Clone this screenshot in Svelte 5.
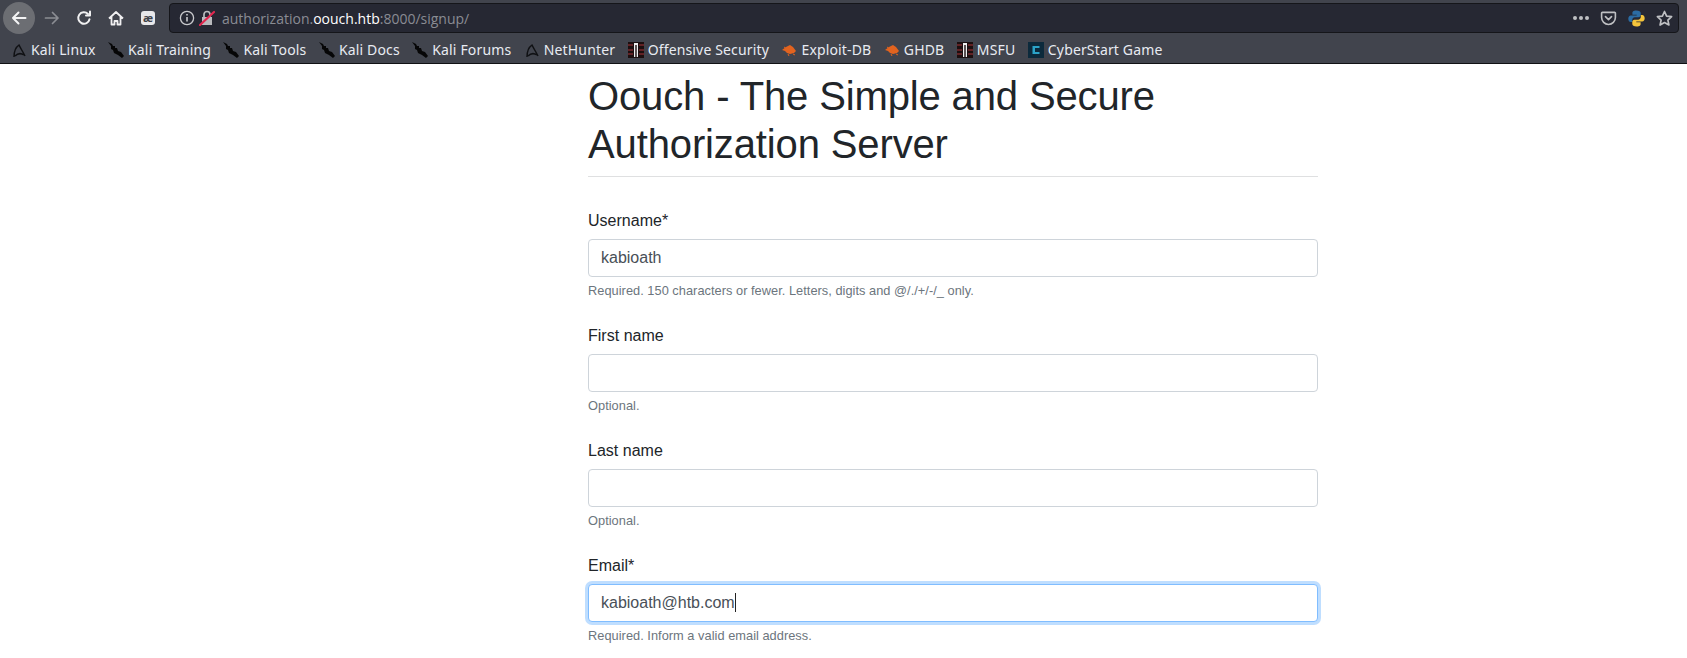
<script lang="ts">
  const bookmarks = [
    { name: "Kali Linux", icon: "dragon" },
    { name: "Kali Training", icon: "sword" },
    { name: "Kali Tools", icon: "sword" },
    { name: "Kali Docs", icon: "sword" },
    { name: "Kali Forums", icon: "sword" },
    { name: "NetHunter", icon: "dragon" },
    { name: "Offensive Security", icon: "offsec" },
    { name: "Exploit-DB", icon: "bug" },
    { name: "GHDB", icon: "bug" },
    { name: "MSFU", icon: "offsec" },
    { name: "CyberStart Game", icon: "cyber" },
  ];

  const fields = [
    { label: "Username*", value: "kabioath", help: "Required. 150 characters or fewer. Letters, digits and @/./+/-/_ only." },
    { label: "First name", value: "", help: "Optional." },
    { label: "Last name", value: "", help: "Optional." },
    { label: "Email*", value: "kabioath@htb.com", help: "Required. Inform a valid email address.", focused: true },
  ];
</script>

<div class="page">
  <header class="chrome">
    <div class="toolbar">
      <div class="nav">
        <span class="back">
          <svg width="16" height="16" viewBox="0 0 16 16" fill="none" stroke="#f4f4f5" stroke-width="2" stroke-linecap="round" stroke-linejoin="round"><path d="M14.500 8H2M7.500 2.500 2 8l5.500 5.500" /></svg>
        </span>
        <span class="tool">
          <svg width="16" height="16" viewBox="0 0 16 16" fill="none" stroke="#8b8d93" stroke-width="1.700" stroke-linecap="round" stroke-linejoin="round"><path d="M1.500 8H14M8.500 2.500 14 8l-5.500 5.500" /></svg>
        </span>
        <span class="tool">
          <svg width="16" height="16" viewBox="0 0 16 16" fill="none" stroke="#f0f0f1" stroke-width="2" stroke-linecap="round" stroke-linejoin="round"><path d="M13.500 9.200A5.700 5.700 0 1 1 12 4" /><path d="M14 1.500v4h-4" /></svg>
        </span>
        <span class="tool">
          <svg width="16" height="16" viewBox="0 0 16 16" fill="none" stroke="#f0f0f1" stroke-width="1.800" stroke-linejoin="round"><path d="M1 8.500 8 2l7 6.500M3.500 7v7.500h3V11h3v3.500h3V7" /></svg>
        </span>
        <span class="tool">
          <span class="ae">æ</span>
        </span>
      </div>
      <div class="urlbar">
        <svg class="info" width="16" height="16" viewBox="0 0 16 16" fill="none" stroke="#c9cacd" stroke-width="1.300"><circle cx="8" cy="8" r="6.600" /><path d="M8 7v4.500M8 4v1.600" stroke-width="1.600" /></svg>
        <svg class="lock" width="16" height="16" viewBox="0 0 16 16"><path d="M3 7h10v8H3Z" fill="#b9babd" /><path d="M5 7V4.500a3 3 0 0 1 6 0V7" fill="none" stroke="#b9babd" stroke-width="1.700" /><path d="M1 15 15 2" stroke="#e22850" stroke-width="2.200" stroke-linecap="round" /></svg>
        <span class="url">authorization.<b>oouch.htb</b>:8000/signup/</span>
        <span class="url-actions">
          <span class="dots"><i></i><i></i><i></i></span>
          <svg width="17" height="17" viewBox="0 0 18 18" fill="none" stroke="#bfc0c3" stroke-width="1.700" stroke-linecap="round" stroke-linejoin="round"><path d="M2.500 2.500h13a.8.8 0 0 1 .8.8V8a7.300 7.300 0 0 1-14.600 0V3.300a.8.8 0 0 1 .8-.8Z" /><path d="m5.800 7 3.200 3.200L12.200 7" /></svg>
          <svg width="17" height="17" viewBox="0 0 17 17"><path d="M8.400.5C5 .5 4.400 1.800 4.400 3v1.800h4.300v.7H2.800C1.300 5.500.3 6.800.3 8.700c0 2 1 3.300 2.400 3.300h1.500V10c0-1.400 1.200-2.700 2.700-2.700h3.700c1.200 0 2.100-1 2.100-2.200V3c0-1.400-1.500-2.500-4.600-2.500Z" fill="#2b6ca3" /><path d="M8.600 16.500c3.400 0 4-1.300 4-2.500v-1.800H8.300v-.7h5.900c1.500 0 2.500-1.300 2.500-3.200 0-2-1-3.300-2.400-3.300h-1.500V7c0 1.400-1.200 2.700-2.700 2.700H6.400c-1.200 0-2.100 1-2.100 2.200V14c0 1.400 1.500 2.500 4.300 2.500Z" fill="#f5c53b" /></svg>
          <svg width="17" height="17" viewBox="0 0 17 17" fill="none" stroke="#bfc0c3" stroke-width="1.700" stroke-linejoin="round"><path d="m8.500 1.500 2.100 4.600 5 .6-3.700 3.400 1 4.900-4.400-2.500L4.100 15l1-4.900L1.400 6.700l5-.6Z" /></svg>
        </span>
      </div>
    </div>
    <nav class="bookmarks">
      {#each bookmarks as mark}
        <span class="mark">
          {#if mark.icon === "dragon"}
            <svg width="16" height="16" viewBox="0 0 16 16" fill="none" stroke="#101114" stroke-width="1.500"><path d="M3 15c0-5 2-10 5-12 2 4 4 7 6 11M4 14c3-3 6-3 9-1" /></svg>
          {:else if mark.icon === "sword"}
            <svg width="16" height="16" viewBox="0 0 16 16" fill="#060607"><path d="M0 0 4 2 5 4 7 4 7 6 9 6 10 9 13 10 16 14 14 16 10 13 6 11 5 8 3 7 3 4Z" /></svg>
          {:else if mark.icon === "offsec"}
            <svg width="16" height="16" viewBox="0 0 16 16"><rect width="16" height="16" fill="#1c0f10" /><path d="M0 3h5M11 3h5M0 8h5M11 8h5M0 12h5M11 12h5" stroke="#7a2a2c" stroke-width="1.500" /><path d="M6 15V1h4v14H8.700V3H7.300v12Z" fill="#eee" /></svg>
          {:else if mark.icon === "bug"}
            <svg width="16" height="16" viewBox="0 0 16 16"><path d="M1 8l4-3 4-2 3 2 3 4-2 2-4 1-3-1-2-2Z" fill="#e2631f" /><path d="M3 5l3 2M7 12l1 2M12 12l2 1" stroke="#e2631f" /></svg>
          {:else}
            <svg width="16" height="16" viewBox="0 0 16 16"><rect width="16" height="16" fill="#0c2a3c" /><path d="M11.500 4h-7v8h7v-2h-4.500V6h4.500Z" fill="#2ba3c8" /></svg>
          {/if}
          <span>{mark.name}</span>
        </span>
      {/each}
    </nav>
  </header>

  <main class="content">
    <h1>Oouch - The Simple and Secure Authorization Server</h1>
    <hr />
    <form>
      {#each fields as field}
        <div class="group">
          <div class="label">{field.label}</div>
          <div class="input" class:focused={field.focused}>
            {field.value}{#if field.focused}<span class="caret"></span>{/if}
          </div>
          <small>{field.help}</small>
        </div>
      {/each}
    </form>
  </main>
</div>

<style>
  :global(body) {
    margin: 0;
    background: #fff;
    overflow: hidden;
  }

  .page {
    height: 658px;
    overflow: hidden;
    font-family: "Liberation Sans", Arial, sans-serif;
  }

  .chrome {
    background: #41444d;
    border-bottom: 1px solid #101114;
    font-family: "Noto Sans", sans-serif;
  }

  .toolbar {
    height: 36px;
    display: flex;
    align-items: center;
    padding: 0 8px 0 3px;
  }

  .nav {
    display: flex;
    align-items: center;
    width: 166px;
    flex-shrink: 0;
  }

  .back {
    width: 32px;
    height: 32px;
    margin-right: 1px;
    border-radius: 50%;
    background: #6c6e73;
    display: flex;
    align-items: center;
    justify-content: center;
  }

  .tool {
    width: 32px;
    height: 32px;
    display: flex;
    align-items: center;
    justify-content: center;
  }

  .ae {
    width: 14px;
    height: 14px;
    border-radius: 3px;
    background: #e8e8ea;
    color: #3f4249;
    font-size: 11px;
    line-height: 13px;
    text-align: center;
    font-weight: 700;
  }

  .urlbar {
    flex: 1;
    height: 30px;
    background: #262833;
    border: 1px solid #15161a;
    border-radius: 4px;
    display: flex;
    align-items: center;
    box-sizing: border-box;
    padding: 0 5px 0 9px;
    font-family: "Open Sans", sans-serif;
    font-size: 14px;
    color: #8a8c93;
  }

  .lock {
    margin-left: 4px;
  }

  .url {
    margin-left: 7px;
  }

  .url b {
    font-weight: 400;
    color: #fff;
  }

  .url-actions {
    margin-left: auto;
    display: flex;
    align-items: center;
    gap: 11px;
  }

  .dots {
    display: flex;
    gap: 2px;
  }

  .dots i {
    width: 4px;
    height: 4px;
    border-radius: 50%;
    background: #bfc0c3;
  }

  .bookmarks {
    height: 27px;
    display: flex;
    align-items: center;
    padding-left: 11px;
    gap: 12.500px;
    color: #e8ebf2;
    font-size: 14px;
    letter-spacing: 0.15px;
  }

  .mark {
    display: flex;
    align-items: center;
    gap: 4px;
    white-space: nowrap;
  }

  .content {
    width: 730px;
    margin-left: 588px;
    padding-top: 8px;
    color: #212529;
  }

  h1 {
    margin: 0;
    font-size: 40px;
    font-weight: 400;
    line-height: 48px;
    letter-spacing: -0.13px;
  }

  hr {
    margin: 8px 0 32px;
    border: 0;
    border-top: 1px solid #dfe0e1;
  }

  .group {
    margin-bottom: 23.800px;
  }

  .label {
    font-size: 16px;
    line-height: 24px;
    margin-bottom: 6px;
    letter-spacing: 0.02px;
  }

  .input {
    height: 38px;
    box-sizing: border-box;
    border: 1px solid #ced4da;
    border-radius: 4px;
    padding: 0 12px;
    font-size: 16px;
    line-height: 36px;
    color: #495057;
    background: #fff;
  }

  .input.focused {
    border-color: #80bdff;
    box-shadow: 0 0 0 3px rgba(0, 123, 255, 0.25);
  }

  .caret {
    display: inline-block;
    width: 1px;
    height: 19px;
    background: #222;
    vertical-align: -4px;
  }

  small {
    display: block;
    margin-top: 4px;
    font-size: 12.800px;
    line-height: 19.200px;
    color: #6c757d;
    letter-spacing: 0.03px;
  }
</style>
